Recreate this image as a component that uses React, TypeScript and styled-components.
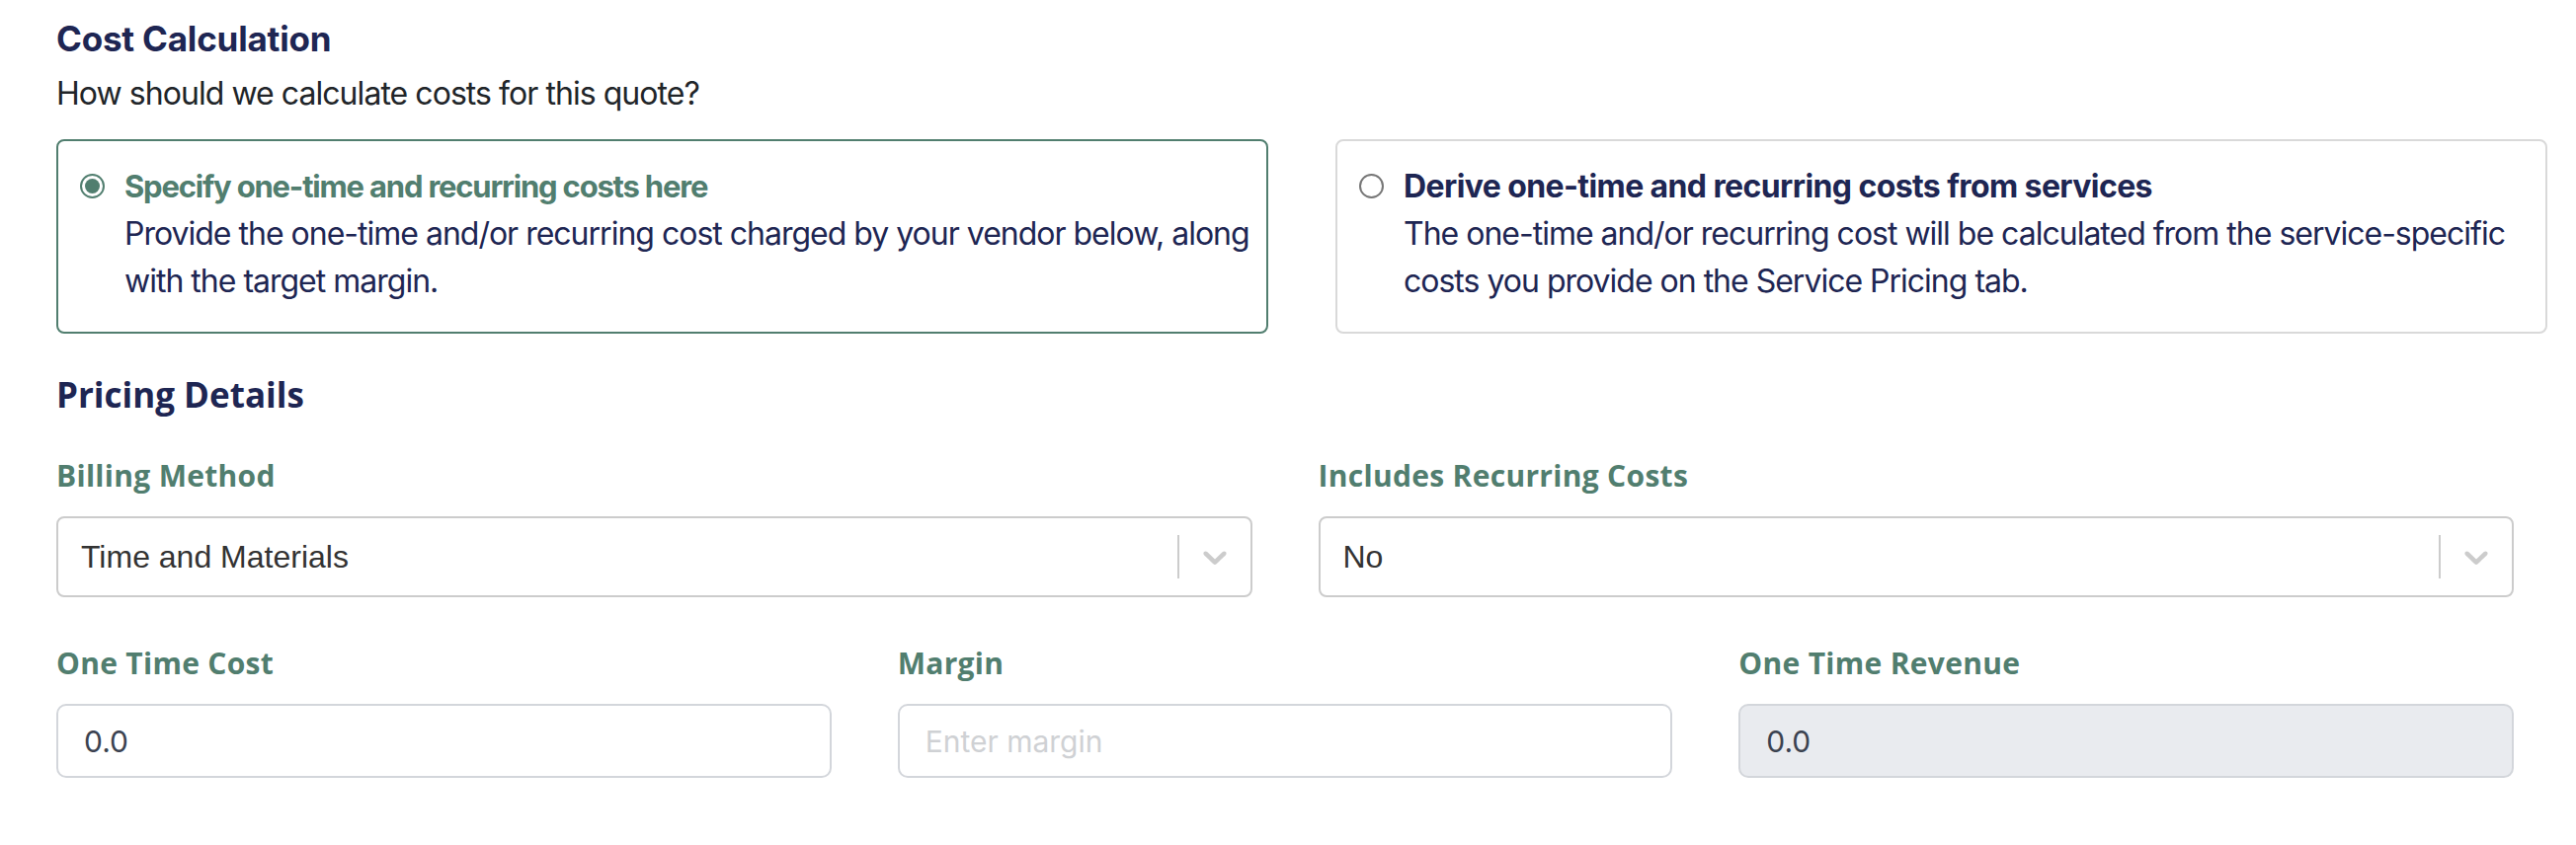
import styled, { createGlobalStyle } from "styled-components";

const GlobalStyle = createGlobalStyle`
  html, body {
    margin: 0;
    padding: 0;
    background: #ffffff;
  }
  * {
    box-sizing: border-box;
  }
`;

const Page = styled.main`
  padding: 18px 29px 0 57px;
  font-family: Inter, "Noto Sans", sans-serif;
`;

const Heading = styled.h2`
  margin: 0 0 10px;
  font-family: Inter, sans-serif;
  font-size: 35px;
  line-height: 43px;
  font-weight: 700;
  letter-spacing: -0.2px;
  color: #1e2653;
`;

const Prompt = styled.p`
  margin: 0 0 22px;
  font-size: 32px;
  line-height: 48px;
  letter-spacing: -0.95px;
  color: #212529;
`;

const CardGrid = styled.div`
  display: grid;
  grid-template-columns: 1fr 1fr;
  gap: 68px;
`;

const Card = styled.label<{ $active: boolean }>`
  display: flex;
  align-items: flex-start;
  gap: 20px;
  padding: 22px 4px 27px 22px;
  border: 2px solid ${(p) => (p.$active ? "#517e6f" : "#d9d9d9")};
  border-radius: 8px;
  cursor: pointer;
`;

const Radio = styled.span<{ $checked: boolean }>`
  flex: none;
  width: 25px;
  height: 25px;
  margin-top: 11px;
  border-radius: 50%;
  border: 2px solid ${(p) => (p.$checked ? "#517e6f" : "#767676")};
  background: #ffffff;
  display: flex;
  align-items: center;
  justify-content: center;

  &::after {
    content: "";
    display: ${(p) => (p.$checked ? "block" : "none")};
    width: 15px;
    height: 15px;
    border-radius: 50%;
    background: #517e6f;
  }
`;

const OptionText = styled.div`
  display: flex;
  flex-direction: column;
  font-size: 32px;
  line-height: 48px;
  letter-spacing: -1px;
`;

const OptionTitle = styled.span<{ $active: boolean }>`
  font-weight: 700;
  font-size: ${(p) => (p.$active ? "31px" : "32px")};
  letter-spacing: ${(p) => (p.$active ? "-1.2px" : "-0.6px")};
  color: ${(p) => (p.$active ? "#517e6f" : "#1e2653")};
`;

const OptionBody = styled.span`
  color: #1e2653;
`;

const SectionTitle = styled.h3`
  margin: 40px 0 43px;
  font-family: "Open Sans", sans-serif;
  font-size: 35px;
  line-height: 43px;
  font-weight: 700;
  color: #1e2653;
`;

const Form = styled.div`
  display: flex;
  flex-direction: column;
  gap: 49px;
  padding-right: 34px;
`;

const Row = styled.div<{ $cols: number }>`
  display: grid;
  grid-template-columns: repeat(${(p) => p.$cols}, 1fr);
  gap: 67px;
`;

const Field = styled.div`
  display: flex;
  flex-direction: column;
  gap: 23px;
`;

const Label = styled.label`
  font-family: "Open Sans", sans-serif;
  font-size: 30px;
  line-height: 36px;
  font-weight: 700;
  letter-spacing: 0.3px;
  color: #517e6f;
`;

const SelectControl = styled.div`
  display: flex;
  align-items: stretch;
  height: 82px;
  border: 2px solid #cccccc;
  border-radius: 8px;
  background: #ffffff;
`;

const SelectValue = styled.div`
  flex: 1;
  display: flex;
  align-items: center;
  padding-left: 23px;
  font-family: "Liberation Sans", Arial, sans-serif;
  font-size: 32px;
  color: #333333;
`;

const Separator = styled.span`
  width: 2px;
  margin: 17px 0;
  background: #cccccc;
`;

const Indicator = styled.span`
  display: flex;
  align-items: center;
  padding: 0 16px;
  color: #cccccc;
`;

const TextInput = styled.input`
  height: 75px;
  width: 100%;
  padding: 0 26px;
  border: 2px solid #d3d6db;
  border-radius: 10px;
  background: #ffffff;
  font-family: Inter, sans-serif;
  font-size: 30px;
  color: #3b4250;
  outline: none;

  &::placeholder {
    color: #cfd1d4;
  }

  &:disabled {
    background: #e9ebef;
    color: #3b4250;
    -webkit-text-fill-color: #3b4250;
  }
`;

const Chevron = () => (
  <svg width="40" height="40" viewBox="0 0 20 20" fill="currentColor" aria-hidden="true">
    <path d="M4.516 7.548c0.436-0.446 1.043-0.481 1.576 0l3.908 3.747 3.908-3.747c0.533-0.481 1.141-0.446 1.574 0 0.436 0.445 0.408 1.197 0 1.615-0.406 0.418-4.695 4.502-4.695 4.502-0.217 0.223-0.502 0.335-0.787 0.335s-0.57-0.112-0.789-0.335c0 0-4.287-4.084-4.695-4.502s-0.436-1.170 0-1.615z" />
  </svg>
);

const Select = ({ value }: { value: string }) => (
  <SelectControl>
    <SelectValue>{value}</SelectValue>
    <Separator />
    <Indicator>
      <Chevron />
    </Indicator>
  </SelectControl>
);

const options = [
  {
    title: "Specify one-time and recurring costs here",
    body: "Provide the one-time and/or recurring cost charged by your vendor below, along with the target margin.",
    active: true,
  },
  {
    title: "Derive one-time and recurring costs from services",
    body: "The one-time and/or recurring cost will be calculated from the service-specific costs you provide on the Service Pricing tab.",
    active: false,
  },
];

const App = () => {
  return (
    <>
      <GlobalStyle />
      <Page>
        <Heading>Cost Calculation</Heading>
        <Prompt>How should we calculate costs for this quote?</Prompt>
        <CardGrid>
          {options.map((o) => (
            <Card key={o.title} $active={o.active}>
              <Radio $checked={o.active} />
              <OptionText>
                <OptionTitle $active={o.active}>{o.title}</OptionTitle>
                <OptionBody>{o.body}</OptionBody>
              </OptionText>
            </Card>
          ))}
        </CardGrid>

        <SectionTitle>Pricing Details</SectionTitle>
        <Form>
          <Row $cols={2}>
            <Field>
              <Label>Billing Method</Label>
              <Select value="Time and Materials" />
            </Field>
            <Field>
              <Label>Includes Recurring Costs</Label>
              <Select value="No" />
            </Field>
          </Row>
          <Row $cols={3}>
            <Field>
              <Label>One Time Cost</Label>
              <TextInput defaultValue="0.0" />
            </Field>
            <Field>
              <Label>Margin</Label>
              <TextInput placeholder="Enter margin" />
            </Field>
            <Field>
              <Label>One Time Revenue</Label>
              <TextInput value="0.0" disabled readOnly />
            </Field>
          </Row>
        </Form>
      </Page>
    </>
  );
};

export default App;
